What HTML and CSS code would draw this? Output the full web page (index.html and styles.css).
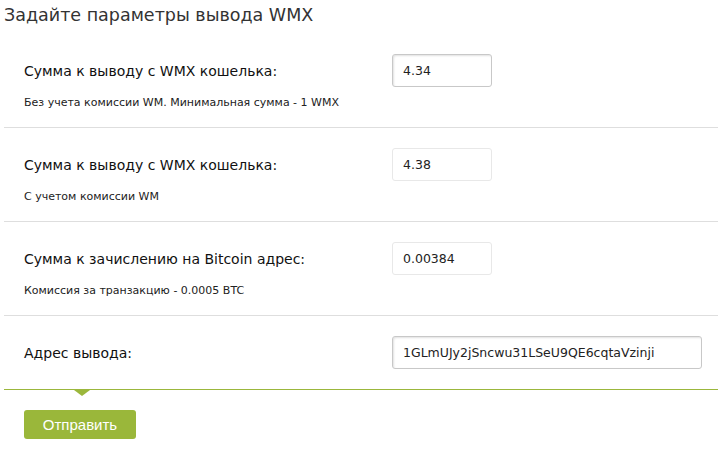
FILE: index.html
```html
<!DOCTYPE html>
<html lang="ru">
<head>
  <meta charset="UTF-8">
  <title>Вывод WMX</title>
  <link rel="stylesheet" href="styles.css">
</head>
<body>

  <!-- Title -->
  <h1 class="title">Задайте параметры вывода WMX</h1>

  <!-- Withdraw form -->
  <form class="withdraw">
    <div class="row">
      <div class="line">
        <label class="label" for="amount">Сумма к выводу с WMX кошелька:</label>
        <input class="field field-active" id="amount" type="text" value="4.34" autofocus>
      </div>
      <p class="note">Без учета комиссии WM. Минимальная сумма - 1 WMX</p>
    </div>

    <div class="row">
      <div class="line">
        <label class="label" for="amountFee">Сумма к выводу с WMX кошелька:</label>
        <input class="field" id="amountFee" type="text" value="4.38" readonly>
      </div>
      <p class="note">С учетом комиссии WM</p>
    </div>

    <div class="row">
      <div class="line">
        <label class="label" for="amountBtc">Сумма к зачислению на Bitcoin адрес:</label>
        <input class="field" id="amountBtc" type="text" value="0.00384" readonly>
      </div>
      <p class="note">Комиссия за транзакцию - 0.0005 BTC</p>
    </div>

    <div class="row row-last">
      <div class="line">
        <label class="label" for="address">Адрес вывода:</label>
        <input class="field field-active field-wide" id="address" type="text" value="1GLmUJy2jSncwu31LSeU9QE6cqtaVzinji">
      </div>
    </div>

    <div class="actions">
      <button type="button" class="submit">Отправить</button>
    </div>
  </form>

</body>
</html>
```
FILE: styles.css
```css
* {
  box-sizing: border-box;
  margin: 0;
  padding: 0;
}

body {
  font-family: "DejaVu Sans", Verdana, sans-serif;
  background-color: #fff;
  color: #222;
}

.title {
  font-size: 17.5px;
  font-weight: normal;
  line-height: 26px;
  color: #333;
  padding: 2px 4px 0;
  height: 34px;
}

/* Form rows */
.withdraw {
  margin-left: 4px;
}

.row {
  padding: 20px 0 18px 20px;
  border-bottom: 1px solid #dedede;
}

.row-last {
  padding-bottom: 20px;
  border-bottom-color: #9bb73c;
  position: relative;
}

/* little arrow under the last row */
.row-last::after {
  content: "";
  position: absolute;
  left: 70px;
  bottom: -7px;
  border-left: 8px solid transparent;
  border-right: 8px solid transparent;
  border-top: 6px solid #9bb73c;
}

.line {
  display: flex;
  align-items: center;
  height: 33px;
}

.label {
  width: 368px;
  font-size: 14px;
  color: #111;
}

.note {
  font-size: 11px;
  line-height: 13px;
  margin-top: 9px;
  color: #222;
}

.field {
  width: 100px;
  height: 33px;
  padding: 0 10px;
  font-family: "DejaVu Sans", Verdana, sans-serif;
  font-size: 12.5px;
  color: #222;
  border: 1px solid #e8e8e8;
  border-radius: 3px;
  outline: none;
  background: #fff;
}

.field-active {
  border-color: #c8c8c8;
  box-shadow: inset 1px 1px 2px rgba(0, 0, 0, 0.12);
  caret-color: #000;
}

.field-wide {
  width: 310px;
}

/* Submit */
.actions {
  padding: 20px 0 0 20px;
}

.submit {
  width: 112px;
  height: 29px;
  background-color: #9ab73a;
  color: #fff;
  border: none;
  border-radius: 3px;
  font-family: "Liberation Sans", Arial, sans-serif;
  font-size: 15px;
  cursor: pointer;
}
```
